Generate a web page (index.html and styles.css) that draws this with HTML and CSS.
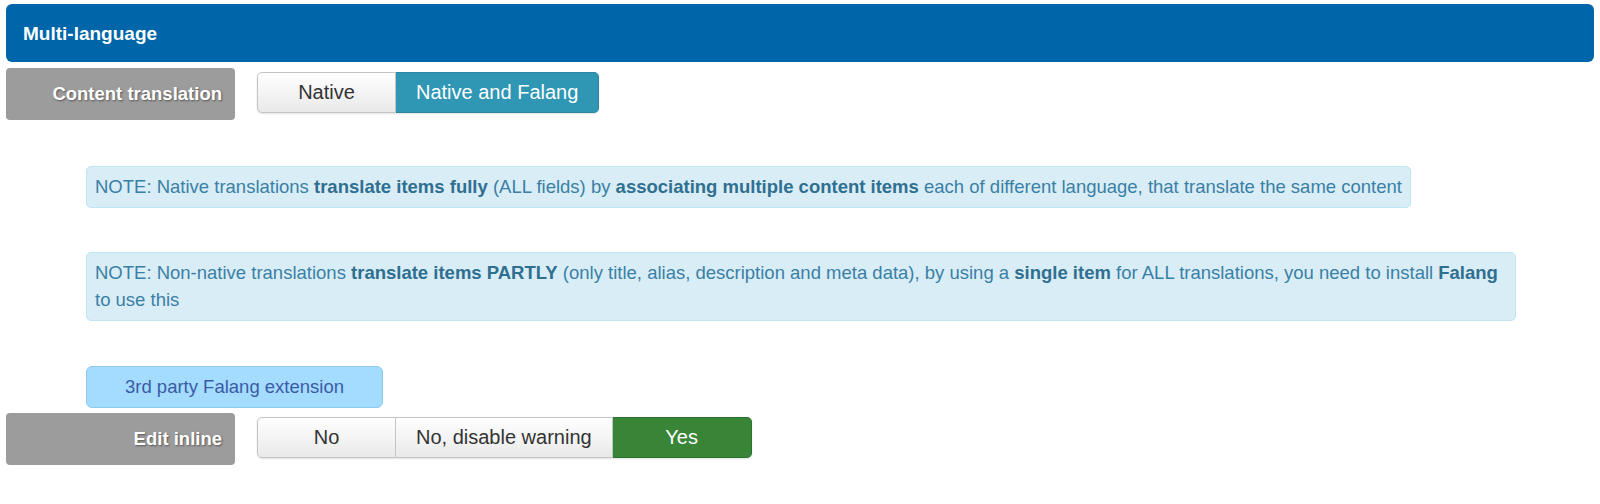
FILE: index.html
```html
<!DOCTYPE html>
<html lang="en">
<head>
  <meta charset="UTF-8">
  <title>Multi-language settings</title>
  <link rel="stylesheet" href="styles.css">
</head>
<body>
  <div class="page">
    <div class="panel-head">Multi-language</div>

    <div class="field-row">
      <div class="field-label">Content translation</div>
      <div class="btn-group">
        <button class="btn">Native</button>
        <button class="btn btn-info">Native and Falang</button>
      </div>
    </div>

    <div class="notes">
      <div class="note">NOTE: Native translations <b>translate items fully</b> (ALL fields) by <b>associating multiple content items</b> each of different language, that translate the same content</div>
      <div class="note">NOTE: Non-native translations <b>translate items PARTLY</b> (only title, alias, description and meta data), by using a <b>single item</b> for ALL translations, you need to install <b>Falang</b> to use this</div>
      <div class="ext-link">3rd party Falang extension</div>
    </div>

    <div class="field-row">
      <div class="field-label">Edit inline</div>
      <div class="btn-group">
        <button class="btn">No</button>
        <button class="btn">No, disable warning</button>
        <button class="btn btn-success">Yes</button>
      </div>
    </div>
  </div>
</body>
</html>
```

FILE: styles.css
```css
body { margin: 0; background: #fff; font-family: "Liberation Sans", Arial, sans-serif; color: #333; }
.page { padding: 4px 6px; }

.panel-head {
  background: #0065a9;
  color: #fff;
  font-weight: bold;
  font-size: 19px;
  height: 58px;
  line-height: 60px;
  padding-left: 17px;
  border-radius: 6px;
}

.field-row { display: flex; align-items: center; gap: 22px; margin-top: 6px; }
.field-label {
  width: 229px;
  height: 52px;
  box-sizing: border-box;
  padding-right: 13px;
  background: #9c9c9c;
  border-radius: 4px;
  color: #fff;
  font-weight: bold;
  font-size: 18.5px;
  line-height: 52px;
  text-align: right;
  text-shadow: 1px 1px 2px rgba(0, 0, 0, 0.45);
}

.btn-group { display: flex; margin-top: -3px; border-radius: 5px; box-shadow: 0 1px 2px rgba(0, 0, 0, 0.12); }
.btn {
  min-width: 139px;
  height: 41px;
  padding: 0 20px;
  margin: 0;
  font-family: inherit;
  font-size: 20px;
  color: #333;
  background: linear-gradient(#ffffff, #e9e9e9);
  border: 1px solid #c4c4c4;
  border-left-width: 0;
  cursor: pointer;
}
.btn:first-child { border-left-width: 1px; border-radius: 5px 0 0 5px; }
.btn:last-child { border-radius: 0 5px 5px 0; }
.btn-info { background: #2f96b4; border-color: #2a87a2; color: #fff; }
.btn-success { background: #388538; border-color: #2f722f; color: #fff; }

.notes { display: flex; flex-direction: column; align-items: flex-start; gap: 44px; padding-left: 80px; margin-top: 46px; }
.note {
  max-width: 1412px;
  padding: 6px 8px 7px;
  line-height: 27px;
  font-size: 18.5px;
  color: #3a80a5;
  background: #d9edf7;
  border: 1px solid #bde6f3;
  border-radius: 5px;
}
.note b { color: #2f6f90; }

.ext-link {
  width: 297px;
  height: 42px;
  box-sizing: border-box;
  line-height: 40px;
  text-align: center;
  font-size: 18.5px;
  color: #3c5ba6;
  background: #a3dcff;
  border: 1px solid #8ccbf0;
  border-radius: 6px;
  margin-top: 1px;
}
.notes + .field-row { margin-top: 5px; }
```
